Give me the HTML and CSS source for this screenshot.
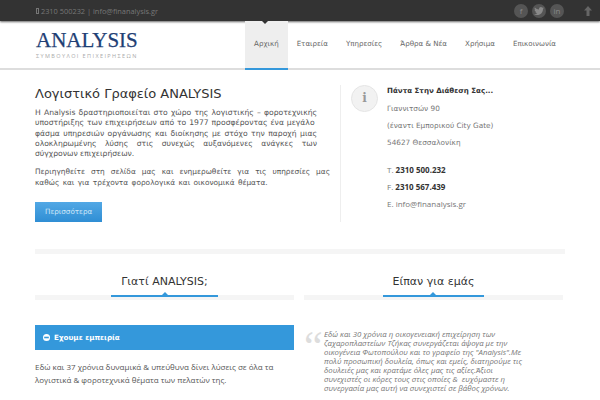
FILE: index.html
```html
<!DOCTYPE html>
<html lang="el">
<head>
    <meta charset="UTF-8">
    <meta name="viewport" content="width=device-width, initial-scale=1.0">
    <title>Analysis</title>
    <link rel="stylesheet" href="styles.css">
</head>
<body>
    <!-- Top bar -->
    <div class="topbar">
        <div class="top-contact"><span class="phone-box"></span> 2310 500232 | info@finanalysis.gr</div>
        <div class="socials">
            <span class="social">f</span>
            <span class="social">
                <svg width="10" height="8" viewBox="0 0 10 8"><path d="M10 1c-.4.2-.7.3-1.200.3.400-.2.700-.6.900-1-.4.2-.8.400-1.300.5C8 .3 7.500 0 6.900 0 5.800 0 5 .9 5 2c0 .2 0 .3 0 .4C3.400 2.300 1.900 1.500 .9 .4.700 .7.600 1 .6 1.400c0 .7.400 1.300.9 1.600-.3 0-.6-.1-.9-.2 0 1 .7 1.800 1.600 2-.3.100-.6.100-.9 0 .3.800 1 1.300 1.900 1.400C2.500 6.800 1.300 7.200 0 7.100 .9 7.700 2 8 3.100 8c3.800 0 5.900-3.100 5.900-5.800v-.3c.4-.2.700-.6 1-.9z" fill="#8a8a8a"/></svg>
            </span>
            <span class="social">in</span>
        </div>
        <svg class="to-top" width="8" height="10" viewBox="0 0 8 10"><path d="M4 0l4 4.500H5.500V10h-3V4.500H0z" fill="#666"/></svg>
    </div>

    <!-- Logo and menu -->
    <header class="header">
        <div class="logo">
            <div class="logo-name">ANALYSIS</div>
            <div class="logo-sub">ΣΥΜΒΟΥΛΟΙ ΕΠΙΧΕΙΡΗΣΕΩΝ</div>
        </div>
        <nav class="menu">
            <a class="menu-item active">Αρχική</a>
            <a class="menu-item">Εταιρεία</a>
            <a class="menu-item">Υπηρεσίες</a>
            <a class="menu-item">Άρθρα &amp; Νέα</a>
            <a class="menu-item">Χρήσιμα</a>
            <a class="menu-item">Επικοινωνία</a>
        </nav>
    </header>

    <!-- Intro and contact -->
    <section class="intro">
        <div class="intro-text">
            <h1>Λογιστικό Γραφείο ANALYSIS</h1>
            <p class="justified narrow">Η Analysis δραστηριοποιείται στο χώρο της λογιστικής – φοροτεχνικής υποστήριξης των επιχειρήσεων από το 1977 προσφέροντας ένα μεγάλο&nbsp; φάσμα υπηρεσιών οργάνωσης και διοίκησης με στόχο την παροχή μιας ολοκληρωμένης λύσης στις συνεχώς αυξανόμενες ανάγκες των σύγχρονων επιχειρήσεων.</p>
            <p class="justified browse">Περιηγηθείτε στη σελίδα μας και ενημερωθείτε για τις υπηρεσίες μας καθώς και για τρέχοντα φορολογικά και οικονομικά θέματα.</p>
            <a class="more-btn">Περισσότερα</a>
        </div>
        <div class="contact">
            <div class="info-icon">i</div>
            <div class="contact-lines">
                <strong class="contact-title">Πάντα Στην Διάθεση Σας...</strong>
                <div>Γιαννιτσών 90</div>
                <div>(έναντι Εμπορικού City Gate)</div>
                <div class="gap-after">54627 Θεσσαλονίκη</div>
                <div class="contact-latin">T. <strong>2310 500.232</strong></div>
                <div class="contact-latin">F. <strong>2310 567.439</strong></div>
                <div class="contact-latin">E. info@finanalysis.gr</div>
            </div>
        </div>
    </section>

    <div class="divider"></div>

    <!-- Bottom columns -->
    <section class="columns">
        <div class="col">
            <div class="col-head">
                <h2><span class="col-title">Γιατί ANALYSIS;</span></h2>
            </div>
            <div class="acc-title">
                <svg class="minus" width="7" height="7" viewBox="0 0 7 7"><circle cx="3.500" cy="3.500" r="3.500" fill="#fff"/><rect x="1.200" y="2.700" width="4.600" height="1.600" fill="#3498db"/></svg>
                Εχουμε εμπειρία
            </div>
            <p class="acc-text">Εδώ και 37 χρόνια δυναμικά &amp; υπεύθυνα δίνει λύσεις σε όλα τα λογιστικά &amp; φοροτεχνικά θέματα των πελατών της.</p>
        </div>
        <div class="col">
            <div class="col-head">
                <h2><span class="col-title">Είπαν για εμάς</span></h2>
            </div>
            <div class="quote">
                <span class="quote-mark">“</span>
                <p>Εδώ και 30 χρόνια η οικογενειακή επιχείρηση των ζαχαροπλαστείων Τζήκας συνεργάζεται άψογα με την οικογένεια Φωτοπούλου και το γραφείο της "Analysis".Με πολύ προσωπική δουλεία, όπως και εμείς, διατηρούμε τις δουλειές μας και κρατάμε όλες μας τις αξίες.Άξιοι συνεχιστές οι κόρες τους στις οποίες &amp;&nbsp; ευχόμαστε η συνεργασία μας αυτή να συνεχιστεί σε βάθος χρόνων.</p>
            </div>
        </div>
    </section>
</body>
</html>
```

FILE: styles.css
```css
body {
    margin: 0;
    height: 400px;
    overflow: hidden;
    background-color: #fff;
    font-family: "DejaVu Sans", sans-serif;
    font-size: 8px;
    color: #555;
}

p {
    margin: 0;
}

/* Top bar */
.topbar {
    display: flex;
    align-items: center;
    height: 21px;
    padding-left: 35px;
    background-color: #333;
    box-shadow: 0 1px 2px rgba(0, 0, 0, 0.6);
    position: relative;
}

.top-contact {
    flex: 1;
    font-family: "Open Sans", sans-serif;
    font-size: 7.400px;
    color: #777;
}

.phone-box {
    display: inline-block;
    width: 3px;
    height: 6px;
    margin-left: 1px;
    border: 1px solid #777;
    box-sizing: border-box;
}

.socials {
    display: flex;
    gap: 4px;
    margin-right: 20px;
}

.social {
    display: flex;
    align-items: center;
    justify-content: center;
    width: 14px;
    height: 14px;
    border-radius: 50%;
    background-color: #555;
    color: #8a8a8a;
    font-family: "Open Sans", sans-serif;
    font-size: 8px;
}

.to-top {
    margin-right: 8px;
}

/* Header */
.header {
    display: flex;
    justify-content: space-between;
    height: 47px;
    padding-left: 36px;
    padding-right: 35px;
    border-bottom: 2px solid #ddd;
}

.logo {
    padding-top: 7px;
}

.logo-name {
    font-family: "Liberation Serif", serif;
    font-size: 21px;
    line-height: 24px;
    color: #1f3f75;
    -webkit-text-stroke: 0.25px #1f3f75;
}

.logo-sub {
    font-family: "Open Sans", sans-serif;
    font-size: 5.500px;
    letter-spacing: 1.400px;
    line-height: 8px;
    color: #aaa;
}

.menu {
    display: flex;
    height: 49px;
}

.menu-item {
    padding: 18px 9px 0;
    font-size: 7.100px;
    color: #666;
    box-sizing: border-box;
}

.menu-item.active {
    background-color: #eee;
    border-bottom: 2px solid #3498db;
    position: relative;
}

.menu-item.active::before {
    content: "";
    position: absolute;
    top: 0;
    left: 17px;
    border: 3px solid transparent;
    border-top-color: #333;
}

/* Intro */
.intro {
    display: flex;
    padding: 15px 35px 0;
    height: 179px;
    box-sizing: border-box;
}

.intro-text {
    width: 295px;
    margin-right: 10px;
}

h1 {
    margin: 0 0 5px;
    font-size: 13px;
    font-weight: normal;
    line-height: 18px;
    color: #333;
}

.justified {
    margin-bottom: 8px;
    line-height: 10.250px;
    text-align: justify;
}

.narrow {
    width: 282px;
    font-size: 7.650px;
}

.browse {
    font-size: 7.400px;
    word-spacing: 1px;
}

.more-btn {
    display: inline-block;
    margin-top: 6px;
    padding: 0 10px;
    height: 20px;
    line-height: 20px;
    background: linear-gradient(#52a8e5, #2f8ed4);
    color: #cfe7f8;
    font-size: 7.200px;
}

.contact {
    display: flex;
    align-items: flex-start;
    height: 137px;
    padding-left: 10px;
    border-left: 1px solid #eee;
}

.info-icon {
    flex: none;
    width: 25px;
    height: 25px;
    margin-right: 9px;
    border: 1px solid #e5e5e5;
    border-radius: 50%;
    background-color: #f2f2f2;
    color: #999;
    font-family: "DejaVu Serif", serif;
    font-weight: bold;
    font-size: 12px;
    line-height: 25px;
    text-align: center;
}

.contact-lines {
    font-size: 7.300px;
    line-height: 17px;
    color: #777;
}

.contact-latin {
    font-family: "Open Sans", sans-serif;
    font-size: 8px;
}

.contact-lines strong {
    color: #333;
}

.contact-lines .contact-title {
    display: block;
    margin-bottom: 2.500px;
    font-size: 7.100px;
    line-height: 12px;
}

.gap-after {
    margin-bottom: 10px;
}

.divider {
    height: 5px;
    margin: 0 35px;
    background-color: #f5f5f5;
}

/* Bottom columns */
.columns {
    display: flex;
    gap: 10px;
    padding: 19px 36px 0 35px;
}

.col {
    width: 259px;
}

.col-head {
    margin-bottom: 25px;
    padding-bottom: 3px;
    text-align: center;
    background: linear-gradient(#f5f5f5, #f5f5f5) bottom / 100% 5px no-repeat;
}

h2 {
    margin: 0;
    font-size: 11px;
    font-weight: normal;
    line-height: 18px;
    color: #333;
}

.col-title {
    display: inline-block;
    padding: 0 10px 4px;
    border-bottom: 2px solid #3498db;
    position: relative;
}

.col-title::after {
    content: "";
    position: absolute;
    left: 50%;
    bottom: 0;
    margin-left: -3px;
    border: 3px solid transparent;
    border-top: 0;
    border-bottom-color: #3498db;
}

.acc-title {
    display: flex;
    align-items: center;
    height: 25px;
    padding-left: 8px;
    background-color: #3498db;
    color: #fff;
    font-weight: bold;
    font-size: 7.200px;
}

.minus {
    margin-right: 4px;
}

.acc-text {
    margin-top: 11px;
    font-family: "Open Sans", sans-serif;
    line-height: 12.500px;
}

.quote {
    display: flex;
}

.quote-mark {
    width: 20px;
    font-family: "Liberation Serif", serif;
    font-size: 42px;
    line-height: 42px;
    color: #ddd;
}

.quote p {
    width: 203px;
    margin-top: 4.500px;
    font-family: "Open Sans", sans-serif;
    font-style: italic;
    font-size: 7.800px;
    line-height: 9px;
    color: #777;
}
```
